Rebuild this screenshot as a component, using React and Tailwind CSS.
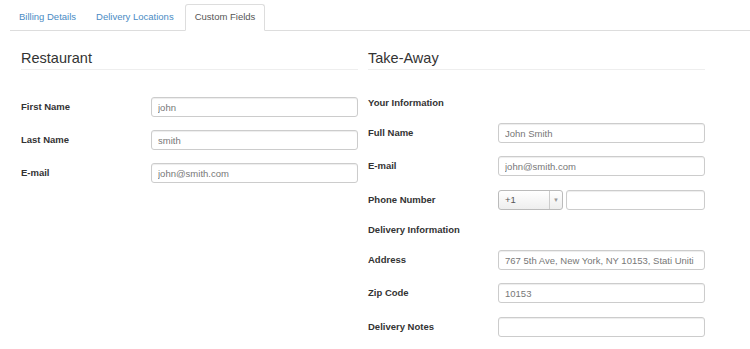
import React from 'react';

const font = { fontFamily: '"Liberation Sans", Arial, sans-serif' };

function Field({ label, value, className = '' }) {
  return (
    <div className={`flex items-center h-[20px] ${className}`}>
      <label className="w-[130px] shrink-0 text-[9.5px] font-bold text-[#333]">{label}</label>
      <input
        readOnly
        value={value}
        className="w-[207px] h-[20px] px-[6px] text-[9.5px] text-[#777] border border-[#ccc] rounded-[3px] shadow-[inset_0_1px_1px_rgba(0,0,0,0.075)] bg-white outline-none"
      />
    </div>
  );
}

function SubTitle({ children, className = '' }) {
  return (
    <div className={`flex items-center h-[20px] text-[9.5px] font-bold text-[#333] ${className}`}>{children}</div>
  );
}

export default function App() {
  return (
    <div className="w-[750px] h-[349px] bg-white overflow-hidden" style={font}>
      <div className="pl-[10px] pt-[4px]">
        <ul className="flex border-b border-[#ddd] h-[27px]">
          <li className="px-[9px] flex items-center text-[9.5px] text-[#4a8bc4] mb-[-1px]">Billing Details</li>
          <li className="px-[10px] ml-[1px] flex items-center text-[9.5px] text-[#4a8bc4] mb-[-1px]">Delivery Locations</li>
          <li className="ml-[1px] px-[9px] flex items-center text-[9.5px] text-[#555] bg-white border border-[#ddd] border-b-white rounded-t-[3px] mb-[-1px]">
            Custom Fields
          </li>
        </ul>
      </div>

      <div className="flex pl-[21px] gap-[10px]">
        <div className="w-[337px]">
          <h3 className="h-[39px] pt-[18px] text-[14.5px] leading-[18px] text-[#333] border-b border-[#eee]">Restaurant</h3>
          <Field className="mt-[27px]" label="First Name" value="john" />
          <Field className="mt-[13px]" label="Last Name" value="smith" />
          <Field className="mt-[13px]" label="E-mail" value="john@smith.com" />
        </div>

        <div className="w-[337px]">
          <h3 className="h-[39px] pt-[18px] text-[14.5px] leading-[18px] text-[#333] border-b border-[#eee]">Take-Away</h3>
          <SubTitle className="mt-[23px]">Your Information</SubTitle>
          <Field className="mt-[10px]" label="Full Name" value="John Smith" />
          <Field className="mt-[13px]" label="E-mail" value="john@smith.com" />
          <div className="flex items-center h-[20px] mt-[14px]">
            <label className="w-[130px] shrink-0 text-[9.5px] font-bold text-[#333]">Phone Number</label>
            <div className="w-[65px] h-[20px] flex border border-[#bbb] rounded-[3px] bg-gradient-to-b from-white to-[#eee]">
              <span className="flex-1 flex items-center pl-[6px] text-[9.5px] text-[#555]">+1</span>
              <span className="w-[13px] border-l border-[#ccc] flex items-center justify-center text-[6px] text-[#999]">▼</span>
            </div>
            <input
              readOnly
              className="ml-[3px] w-[139px] h-[20px] border border-[#ccc] rounded-[3px] shadow-[inset_0_1px_1px_rgba(0,0,0,0.075)] outline-none"
            />
          </div>
          <SubTitle className="mt-[10px]">Delivery Information</SubTitle>
          <Field className="mt-[10px]" label="Address" value="767 5th Ave, New York, NY 10153, Stati Uniti" />
          <Field className="mt-[13px]" label="Zip Code" value="10153" />
          <Field className="mt-[14px]" label="Delivery Notes" value="" />
        </div>
      </div>
    </div>
  );
}
